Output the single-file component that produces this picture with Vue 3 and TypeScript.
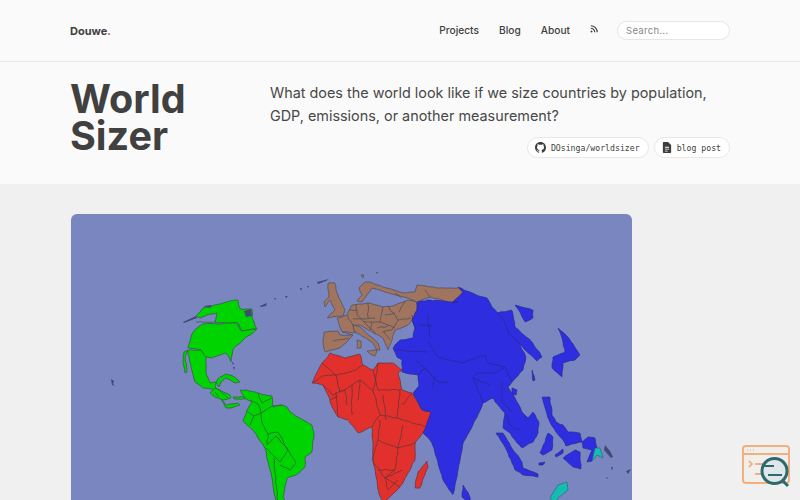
<script setup lang="ts">
const navLinks = ["Projects", "Blog", "About"];

// the outlines are rough traces in page coordinates, organic() breaks up the
// long straight runs and rounds them off so they read like coastlines
function organic(d: string, closed: boolean): string {
  let seed = d.length * 7 + 3;
  const rand = () => {
    seed = (seed * 9301 + 49297) % 233280;
    return seed / 233280 - 0.5;
  };
  return d
    .split("M")
    .filter((s) => s.trim())
    .map((sub) => {
      const nums = sub.replace(/[LZ]/g, " ").trim().split(/\s+/).map(Number);
      const pts: [number, number][] = [];
      for (let i = 0; i + 1 < nums.length; i += 2) pts.push([nums[i], nums[i + 1]]);
      const dense: [number, number][] = [];
      const count = closed ? pts.length : pts.length - 1;
      for (let i = 0; i < count; i++) {
        const a = pts[i];
        const b = pts[(i + 1) % pts.length];
        const steps = Math.max(1, Math.round(Math.hypot(b[0] - a[0], b[1] - a[1]) / 4));
        dense.push(a);
        dense.push([a[0] + (b[0] - a[0]) * 0.12, a[1] + (b[1] - a[1]) * 0.12]);
        for (let s = 1; s < steps; s++) {
          dense.push([
            a[0] + ((b[0] - a[0]) * s) / steps + rand() * 1.2,
            a[1] + ((b[1] - a[1]) * s) / steps + rand() * 1.2,
          ]);
        }
        dense.push([a[0] + (b[0] - a[0]) * 0.88, a[1] + (b[1] - a[1]) * 0.88]);
      }
      if (!closed) dense.push(pts[pts.length - 1]);
      const f = (n: number) => n.toFixed(1);
      if (!closed) return "M" + dense.map((p) => `${f(p[0])} ${f(p[1])}`).join(" L");
      let out = "";
      dense.forEach((p, i) => {
        const n = dense[(i + 1) % dense.length];
        const mx = (p[0] + n[0]) / 2;
        const my = (p[1] + n[1]) / 2;
        out += i === 0 ? `M${f(mx)} ${f(my)}` : ` Q${f(p[0])} ${f(p[1])} ${f(mx)} ${f(my)}`;
      });
      return out + ` Q${f(dense[0][0])} ${f(dense[0][1])} ${f((dense[0][0] + dense[1][0]) / 2)} ${f((dense[0][1] + dense[1][1]) / 2)} Z`;
    })
    .join(" ");
}

const shapes = (list: string[]) => list.map((d) => organic(d, true));

const americas = shapes([
  "M196 316 L203 308 L212 306 L220 304 L230 301 L238 300 L240 309 L247 309 L252 309 L252 318 L257 329 L248 330 L242 331 L238 323 L215 322.5 L217 313 L207 315 L200 318 Z",
  "M190 341 L193 332 L202 324 L237 323 L241 331 L257 329 L243 340 L233 349 L231 362 L228 355 L225 353 L211 358 L205 357 L201 350 L188 348 Z",
  "M188 350 L201 350 L206 357 L206 373 L210 383 L216 382 L215 390 L203 388 L195 382 L191 367 L189 357 Z",
  "M184 352 L188 350 L185 357 L187 372 L185 373 L183 362 Z",
  "M216 382 L220 377 L226 374 L233 376 L240 382 L235 383 L226 378 L221 382 L219 387 Z",
  "M210 393 L215 388 L220 390 L230 395 L231 398 L223 400 L215 397 Z",
  "M221 399 L226 405 L238 403 L240 405 L231 408 L226 408 Z",
  "M233 397 L245 397 L245 399 L234 399 Z",
  "M240 390 L246 390 L258 393 L266 395 L272 396 L273 407 L282 405 L287 407 L290 412 L303 420 L312 425 L314 433 L312 452 L305 457 L305 467 L298 474 L287 478 L283 497 L287 507 L277 507 L271 473 L265 448 L253 430 L243 421 L247 410 L252 402 L245 398 Z",
]);
const americaLines = organic(
  "M250 400 L258 404 L261 413 L272 406 M247 411 L254 416 L261 413 L262 423 M254 416 L250 425 M262 423 L268 434 L267 445 L276 436 L288 450 L280 462 L266 448 M268 434 L278 432 L288 450 M288 450 L296 463 L290 470 L280 465 M274 458 L278 505 M258 393 L262 403 L272 398 M272 406 L282 405 M216 388 L222 393 M222 393 L228 398 M215 392 L219 397 M196 322 L216 322",
  false,
);

const europe = shapes([
  "M328 283 L335 283 L337 293 L345 310 L343 316 L327 318 L335 310 L330 300 L325 307 L324 302 L329 297 Z",
  "M337 318 L347 315 L352 305 L370 303 L383 307 L393 306 L408 300 L417 302 L417 310 L412 320 L408 325 L395 330 L392 340 L388 350 L383 338 L378 335 L372 332 L360 325 L353 325 L355 333 L342 332 Z",
  "M324 332 L338 331 L340 335 L353 335 L347 342 L340 348 L325 352 L323 342 Z",
  "M353 325 L360 327 L378 343 L380 350 L377 350 L373 343 L359 334 L355 332 Z",
  "M365 282 L370 282 L383 287 L403 293 L415 292 L417 285 L437 288 L458 288 L463 292 L457 298 L452 303 L430 297 L417 302 L408 298 L385 292 L372 288 L367 295 L362 302 L357 301 L362 295 L359 288 Z",
  "M357 340 L361 341 L361 348 L357 348 Z",
  "M367 351 L377 350 L375 356 L370 354 Z",
  "M361 275 L364 275 L363 278 Z",
]);
const europeLines = organic(
  "M347 315 L353 325 M356 304 L357 315 L364 322 L380 322 L383 307 M364 322 L376 334 M380 322 L395 328 M388 306 L398 320 L411 318 M372 322 L370 330 M353 319 L375 318 M398 320 L392 330 L382 332 M405 301 L399 312 M368 303 L368 318 M385 315 L395 313 M377 328 L388 326 M384 332 L390 340 M350 310 L357 310 M333 341 L349 338 M395 293 L401 298 M342 332 L353 335 M430 297 L425 290",
  false,
);

const africa = shapes([
  "M312 383 L316 374 L322 363 L330 353 L345 358 L360 354 L363 365 L373 370 L378 363 L393 363 L402 370 L398 373 L402 390 L412 393 L422 410 L432 412 L427 427 L415 443 L415 460 L407 475 L400 487 L392 495 L383 502 L378 490 L373 457 L372 427 L365 430 L358 433 L348 420 L338 417 L332 407 L328 395 L323 385 Z",
  "M427 461 L428 467 L420 488 L415 488 L418 472 Z",
]);
const africaLines = organic(
  "M322 363 L336 375 L356 370 L363 365 M312 383 L322 376 L336 375 L340 392 L352 385 L360 380 L373 391 L378 363 M373 370 L378 390 L401 390 M336 392 L338 417 M352 385 L352 415 M373 391 L380 415 L372 427 M380 415 L397 418 L400 390 M397 418 L427 427 M403 425 L398 448 L415 443 M380 420 L378 440 L398 448 L395 470 L385 478 L388 490 M378 440 L372 460 L385 478 L400 487 M323 385 L333 395 L345 390 M330 400 L338 396 M383 395 L386 420 M360 380 L358 400 M345 390 L347 405 M385 478 L402 470 M402 405 L412 393 M378 470 L395 470 M388 490 L398 480",
  false,
);

const asia = shapes([
  "M417 302 L428 300 L458 302 L452 303 L463 292 L458 287 L472 293 L487 298 L492 307 L497 312 L505 322 L508 328 L520 345 L526 357 L523 370 L512 382 L508 387 L515 398 L522 412 L528 418 L533 412 L539 422 L538 433 L533 442 L522 448 L515 440 L510 433 L503 428 L505 413 L498 405 L493 398 L483 403 L477 417 L463 443 L458 470 L453 495 L443 480 L432 443 L423 433 L431 412 L422 410 L413 393 L419 386 L418 375 L402 372 L402 360 L397 357 L393 348 L400 340 L413 338 L415 328 L412 320 L417 310 Z",
  "M497 313 L512 310 L515 327 L532 342 L542 357 L537 361 L527 352 L508 332 L505 322 Z",
  "M515 305 L533 310 L533 318 L525 322 L520 312 Z",
  "M558 328 L568 337 L580 355 L575 360 L563 363 L562 377 L552 368 L553 357 L565 352 L563 342 Z",
  "M496 433 L503 433 L513 450 L522 462 L523 468 L538 474 L538 477 L523 475 L515 470 L508 453 Z",
  "M463 485 L470 497 L470 503 L462 497 Z",
  "M542 397 L550 397 L552 415 L556 422 L563 425 L568 432 L580 433 L582 442 L572 444 L566 446 L563 440 L556 432 L548 418 Z",
  "M548 433 L553 437 L552 450 L543 455 L540 453 L545 442 Z",
  "M555 455 L563 449 L563 453 L556 457 Z",
  "M539 463 L545 462 L543 465 L539 465 Z",
  "M563 458 L575 450 L580 452 L581 469 L573 467 Z",
  "M582 442 L588 437 L595 438 L597 448 L592 461 L587 462 L592 450 L583 448 Z",
  "M512 388 L517 390 L516 395 L512 394 Z",
  "M532 370 L535 380 L533 381 Z",
]);
const asiaLines = organic(
  "M428 342 L438 357 L462 363 L485 355 L488 363 L505 367 L495 373 L477 373 L473 378 L483 402 M428 315 L430 338 M412 315 L416 330 M395 350 L428 352 M425 368 L438 382 L448 383 M502 382 L502 402 L512 412 M505 413 L510 425 L520 430 M420 325 L432 326 M415 360 L425 368 L418 375 M473 378 L490 385 M505 367 L512 382 M435 375 L432 388",
  false,
);
</script>

<template>
  <div class="page">
    <header class="topbar">
      <div class="wrap topbar-inner">
        <a class="brand">Douwe<span class="dot">.</span></a>
        <nav class="nav">
          <a v-for="link in navLinks" :key="link">{{ link }}</a>
          <svg class="rss" viewBox="0 0 16 16" width="8" height="8">
            <circle cx="3" cy="13" r="2" fill="#444" />
            <path d="M1.500 6.500a8 8 0 0 1 8 8M1.500 1.500a13 13 0 0 1 13 13" fill="none" stroke="#444" stroke-width="2.400" />
          </svg>
          <input class="search" type="text" placeholder="Search..." />
        </nav>
      </div>
    </header>

    <section class="hero">
      <div class="wrap hero-inner">
        <h1 class="title">World<br />Sizer</h1>
        <div class="intro">
          <p>What does the world look like if we size countries by population, GDP, emissions, or another measurement?</p>
          <div class="pills">
            <a class="pill">
              <svg viewBox="0 0 16 16" width="11" height="11">
                <path fill="#3d3d3d" d="M8 0C3.580 0 0 3.580 0 8c0 3.540 2.290 6.530 5.470 7.590.4.070.55-.17.55-.38 0-.19-.01-.82-.01-1.490-2.010.37-2.530-.49-2.690-.94-.09-.23-.48-.94-.82-1.130-.28-.15-.68-.52-.01-.53.63-.01 1.080.58 1.230.82.72 1.210 1.870.87 2.330.66.070-.52.28-.87.51-1.070-1.780-.2-3.640-.89-3.640-3.950 0-.87.31-1.590.82-2.150-.08-.2-.36-1.020.08-2.120 0 0 .67-.21 2.200.82.64-.18 1.320-.27 2-.27s1.360.09 2 .27c1.530-1.040 2.200-.82 2.200-.82.44 1.100.16 1.920.08 2.120.51.56.82 1.270.82 2.150 0 3.070-1.870 3.750-3.650 3.950.29.25.54.73.54 1.480 0 1.070-.01 1.930-.01 2.200 0 .21.15.46.55.38A8.010 8.010 0 0 0 16 8c0-4.420-3.580-8-8-8z" />
              </svg>
              DOsinga/worldsizer
            </a>
            <a class="pill">
              <svg viewBox="0 0 12 16" width="10" height="11">
                <path fill="#3d3d3d" fill-rule="evenodd" d="M1 0h6.500L12 4.500V15a1 1 0 0 1-1 1H1a1 1 0 0 1-1-1V1a1 1 0 0 1 1-1zM3 7v1.200h6V7zm0 2.800V11h6V9.800zm0 2.800v1.200h4v-1.200z" />
              </svg>
              blog post
            </a>
          </div>
        </div>
      </div>
    </section>

    <main class="content">
      <div class="wrap">
        <div class="map-card">
          <svg class="map" viewBox="71 214 561 300" width="561" height="300">
            <g stroke="#2f5f3a" stroke-width="0.8" stroke-linejoin="round">
              <path v-for="d in americas" :key="d" :d="d" fill="#00d400" />
              <path :d="americaLines" fill="none" />
            </g>
            <g stroke="#4a4a52" stroke-width="0.7" stroke-linejoin="round">
              <path v-for="d in europe" :key="d" :d="d" fill="#a0745f" />
              <path :d="europeLines" fill="none" />
            </g>
            <g stroke="#5b3238" stroke-width="0.7" stroke-linejoin="round">
              <path v-for="d in africa" :key="d" :d="d" fill="#e2312d" />
              <path :d="africaLines" fill="none" />
            </g>
            <g stroke="#27278a" stroke-width="0.7" stroke-linejoin="round">
              <path v-for="d in asia" :key="d" :d="d" fill="#2e2ee0" />
              <path :d="asiaLines" fill="none" />
            </g>
            <g fill="#15bdb0" stroke="#2f5a70" stroke-width="0.6">
              <path d="M550 498 L558 485 L567 482 L568 490 L558 498 L555 504 Z" />
              <path d="M595 448 L600 448 L603 458 L597 455 L592 461 Z" />
            </g>
            <g fill="#3f4a78">
              <path d="M111 379 L114 381 L113 384 L115 386 L112 385 Z" />
              <path d="M260 306 L267 303 L266 306 L261 307 Z" />
              <path d="M274 298 L276 298 L275 300 Z" />
              <path d="M285 296 L288 296 L286 298 Z" />
              <path d="M300 288 L302 288 L301 291 Z" />
              <path d="M307 286 L309 286 L308 288 Z" />
              <path d="M317 282 L329 279 L326 281 L318 284 Z" />
              <path d="M183 322 L196 316 L197 318 L184 323 Z" />
              <path d="M203 306 L212 305 L210 308 Z" />
              <path d="M244 311 L251 309 L252 316 L246 317 Z" />
              <path d="M232 362 L234 363 L233 365 Z" />
              <path d="M233 367 L235 367 L234 370 Z" />
              <path d="M376 272 L378 272 L377 274 Z" />
              <path d="M605 445 L610 451 L613 457 L611 458 L604 450 Z" />
              <path d="M611 467 L613 467 L612 471 Z" />
              <path d="M606 477 L608 478 L607 479 Z" />
              <path d="M626 471 L631 469 L628 474 Z" />
            </g>
          </svg>
        </div>
      </div>
    </main>

    <svg class="badge" viewBox="0 0 48 44" width="48" height="44">
      <rect x="1" y="1" width="46" height="37" rx="3" fill="#f0efed" stroke="#f2b07f" stroke-width="2" />
      <path d="M1 9h46" stroke="#f2b07f" stroke-width="2" />
      <path d="M5 5h1M8 5h1M11 5h1" stroke="#c9a58c" stroke-width="1.200" />
      <path d="M7 16l3 3-3 3M13 19h14M13 29h14" stroke="#f2b07f" stroke-width="1.800" fill="none" />
      <path d="M40 35l6 6" stroke="#2c6a6e" stroke-width="3" />
      <circle cx="32.500" cy="26" r="12.500" fill="#dfe7ea" stroke="#2c6a6e" stroke-width="3" />
      <path d="M21 21h11M26 30h14" stroke="#2c6a6e" stroke-width="1.800" />
    </svg>
  </div>
</template>

<style>
html,
body {
  margin: 0;
  overflow: hidden;
}
</style>

<style scoped>
.page {
  position: relative;
  height: 500px;
  overflow: hidden;
  background: #f0f0f0;
  font-family: Inter, "Liberation Sans", sans-serif;
  color: #404040;
}

.wrap {
  width: 660px;
  margin-left: 70px;
}

.topbar {
  height: 61px;
  background: #fafafa;
  border-bottom: 1px solid #e8e8e8;
}

.topbar-inner {
  height: 100%;
  display: flex;
  align-items: center;
  justify-content: space-between;
}

.brand {
  font-size: 11px;
  font-weight: 700;
}

.dot {
  color: #c0392b;
}

.nav {
  display: flex;
  align-items: center;
  gap: 20px;
  padding-bottom: 1px;
  font-size: 10.200px;
  font-weight: 500;
}

.rss {
  margin-top: -2px;
}

.search {
  box-sizing: border-box;
  width: 113px;
  height: 19px;
  margin-left: -1px;
  padding: 0 8px;
  border: 1px solid #e6e6e6;
  border-radius: 10px;
  background: #fff;
  outline: none;
  font: 400 9.500px Inter, sans-serif;
  letter-spacing: 0.3px;
}

.search::placeholder {
  color: #888;
}

.hero {
  height: 122px;
  background: #fafafa;
}

.hero-inner {
  display: flex;
}

.title {
  width: 200px;
  margin: 19px 0 0;
  font-size: 39.500px;
  line-height: 37px;
  font-weight: 700;
}

.intro {
  width: 460px;
  padding-top: 19px;
}

.intro p {
  margin: 0;
  font-size: 14.400px;
  line-height: 23px;
  color: #484848;
}

.pills {
  display: flex;
  justify-content: flex-end;
  gap: 5px;
  margin-top: 10px;
}

.pill {
  display: flex;
  align-items: center;
  gap: 5px;
  height: 21px;
  padding: 0 8px 0 7px;
  box-sizing: border-box;
  border: 1px solid #e8e8e8;
  border-radius: 11px;
  background: #fff;
  font-family: "DejaVu Sans Mono", "Liberation Mono", monospace;
  font-size: 8.200px;
}

.content {
  padding-top: 30px;
}

.map-card {
  width: 561px;
  height: 300px;
  margin-left: 1px;
  overflow: hidden;
  border-radius: 6px 6px 0 0;
  background: #7986bf;
}

.map {
  display: block;
}

.badge {
  position: absolute;
  left: 742px;
  top: 445px;
}
</style>
